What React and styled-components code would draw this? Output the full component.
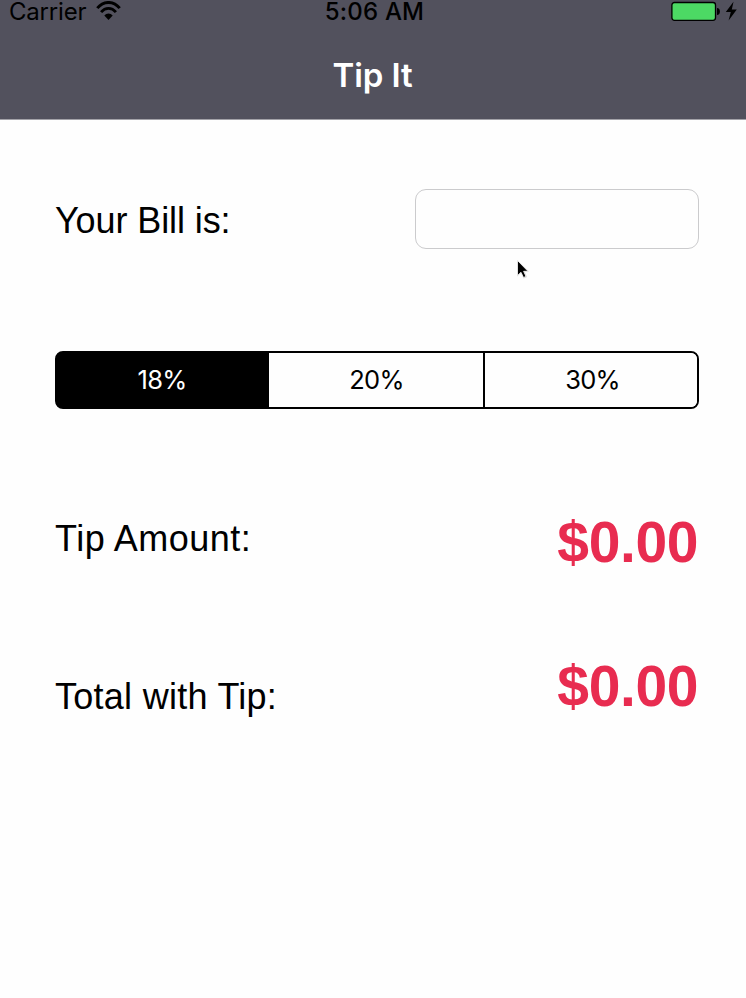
import React, { useState } from "react";
import styled, { createGlobalStyle } from "styled-components";

const GlobalStyle = createGlobalStyle`
  * { box-sizing: border-box; }
  body { margin: 0; background: #fefefe; }
`;

const Screen = styled.div`
  position: relative;
  width: 746px;
  height: 998px;
  overflow: hidden;
  background: #fefefe;
  color: #000;
  font-family: "Liberation Sans", Arial, sans-serif;
`;

const Header = styled.header`
  height: 120px;
  background: #52515d;
  border-bottom: 1px solid #a3a2a8;
  font-family: Inter, sans-serif;
`;

const StatusBar = styled.div`
  display: grid;
  grid-template-columns: 1fr auto 1fr;
  height: 32px;
  padding: 0 9px;
  font-size: 24px;
  line-height: 24px;
`;

const Carrier = styled.div`
  display: flex;
  gap: 10px;
  letter-spacing: -0.2px;
  svg { margin-top: 1px; }
`;

const Time = styled.div`
  font-weight: 500;
  letter-spacing: 0.2px;
  padding-left: 3px;
`;

const Power = styled.div`
  display: flex;
  justify-content: flex-end;
`;

const Title = styled.h1`
  margin: 23px 0 0;
  padding-right: 1px;
  font-size: 33px;
  font-weight: 600;
  line-height: 40px;
  letter-spacing: -0.1px;
  text-align: center;
  color: #fff;
`;

const Content = styled.main`
  padding: 69px 47px 0 55px;
`;

const Row = styled.div`
  display: flex;
  justify-content: space-between;
  height: 60px;
  margin-bottom: ${(p) => p.$gap || 0}px;
`;

const Label = styled.label`
  margin-top: ${(p) => p.$offset}px;
  font-size: 36px;
  line-height: 44px;
  letter-spacing: ${(p) => p.$tracking || 0}px;
  white-space: nowrap;
`;

const BillInput = styled.input`
  width: 284px;
  height: 60px;
  padding: 0 14px;
  border: 1px solid #cbcbcd;
  border-radius: 11px;
  background: #fefefe;
  font: 28px Inter, sans-serif;
  outline: none;
`;

const Segments = styled.div`
  display: grid;
  grid-template-columns: 212px 216px 1fr;
  height: 58px;
  margin-bottom: 106px;
  border: 2px solid #000;
  border-radius: 8px;
  background: linear-gradient(90deg, ${(p) => (p.$firstActive ? "#000" : "#fefefe")} 50%, #fefefe 50%) border-box;
  overflow: hidden;
`;

const Segment = styled.button`
  padding: 0 ${(p) => Math.max(-p.$inset, 0)}px 0 ${(p) => Math.max(p.$inset, 0)}px;
  border: 0;
  border-right: ${(p) => (p.$divider ? "2px solid #000" : "0")};
  background: ${(p) => (p.$active ? "#000" : "#fefefe")};
  color: ${(p) => (p.$active ? "#fff" : "#000")};
  font: 25.5px/54px Inter, sans-serif;
  letter-spacing: -0.8px;
`;

const Amount = styled.output`
  margin: -3px 1px 0 0;
  font-size: 57px;
  font-weight: 700;
  line-height: 60px;
  letter-spacing: -0.4px;
  color: #e82c50;
`;

const Pointer = styled.svg`
  position: absolute;
  left: 514px;
  top: 259px;
`;

const WifiIcon = () => (
  <svg width="25" height="20" viewBox="0 0 25 20" fill="none" stroke="#000">
    <path d="M1.3 7.2C7.5-.5 17.5-.5 23.7 7.2" strokeWidth="2.9" />
    <path d="M5.1 11.2C9.3 6.2 15.7 6.2 19.9 11.2" strokeWidth="2.8" />
    <path d="M8.3 14.6C10.6 11.9 14.4 11.9 16.7 14.6L12.5 19Z" fill="#000" stroke="none" />
  </svg>
);

const BatteryIcon = () => (
  <svg width="67" height="24" viewBox="0 0 67 24">
    <rect x="1.9" y="2.5" width="43.6" height="17.8" rx="2.5" fill="#4cd964" stroke="#000" strokeWidth="1.3" />
    <path d="M47 8Q49.9 8.2 49.9 11.5T47 15Z" />
    <path d="M63.5 1.8L55.8 12H60.8L58.6 20.5L66.8 9.5H61.8Z" />
  </svg>
);

const rates = [
  { percent: 18, inset: -2 },
  { percent: 20, inset: 1 },
  { percent: 30, inset: 3 },
];

export default function App() {
  const [bill, setBill] = useState("");
  const [rate, setRate] = useState(18);
  const value = Number(bill) || 0;
  const tip = (value * rate) / 100;

  return (
    <Screen>
      <GlobalStyle />
      <Header>
        <StatusBar>
          <Carrier>Carrier<WifiIcon /></Carrier>
          <Time>5:06 AM</Time>
          <Power><BatteryIcon /></Power>
        </StatusBar>
        <Title>Tip It</Title>
      </Header>
      <Content>
        <Row $gap={102}>
          <Label $offset={10} $tracking={-0.1} htmlFor="bill">Your Bill is:</Label>
          <BillInput id="bill" value={bill} onChange={(e) => setBill(e.target.value)} />
        </Row>
        <Segments $firstActive={rate === 18}>
          {rates.map(({ percent, inset }, i) => (
            <Segment
              key={percent}
              $active={rate === percent}
              $divider={i === 1}
              $inset={inset}
              onClick={() => setRate(percent)}
            >
              {percent}%
            </Segment>
          ))}
        </Segments>
        <Row $gap={84}>
          <Label $offset={2} $tracking={0.5}>Tip Amount:</Label>
          <Amount>${tip.toFixed(2)}</Amount>
        </Row>
        <Row>
          <Label $offset={16} $tracking={0.27}>Total with Tip:</Label>
          <Amount>${(value + tip).toFixed(2)}</Amount>
        </Row>
      </Content>
      <Pointer width="17" height="23" viewBox="0 0 17 23">
        <path d="M3 1V17.5L7 13.9L9.6 19.5L13 18L10.5 12.5H15Z" fill="#aaa" opacity=".5" />
        <path d="M3.5 1.5V16.5L7 13.3L9.5 18.5L12 17.4L9.6 12.3H14Z" stroke="#fff" strokeWidth=".8" />
      </Pointer>
    </Screen>
  );
}
